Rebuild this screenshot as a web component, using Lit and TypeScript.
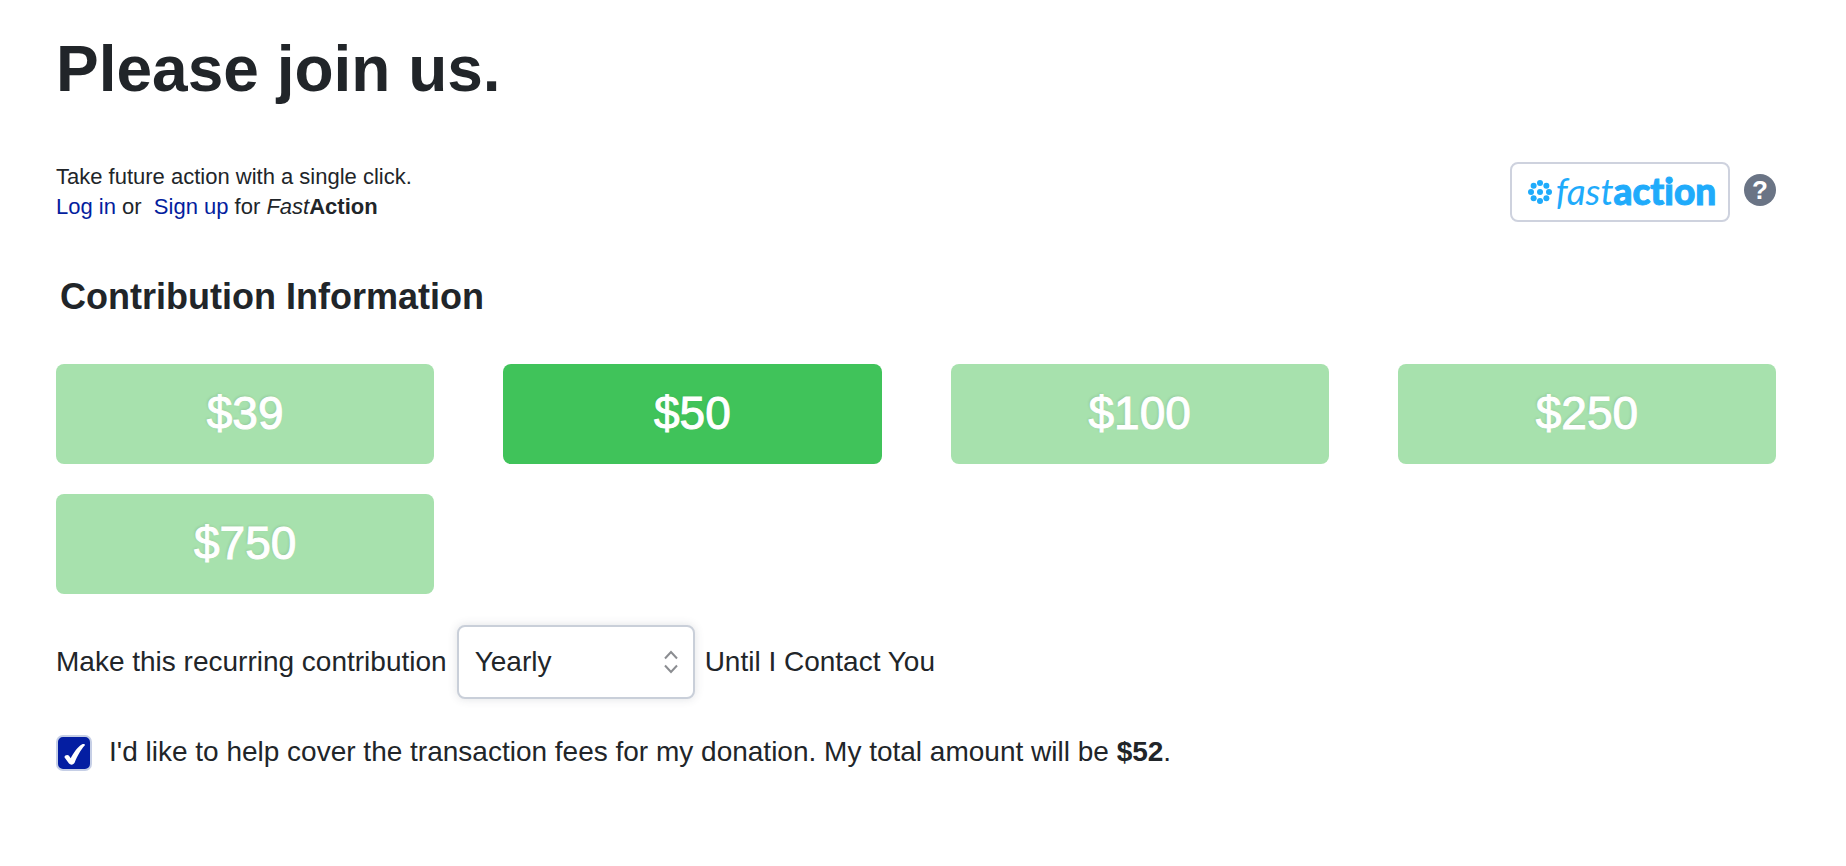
import { LitElement, html, svg, css } from "lit";
import { customElement, state } from "lit/decorators.js";

@customElement("fast-action-bar")
export class FastActionBar extends LitElement {
  static styles = css`
    :host {
      display: flex;
      align-items: flex-start;
      justify-content: space-between;
      gap: 32px;
    }
    .intro {
      margin: 0;
      font-size: 22px;
      line-height: 30px;
    }
    .line {
      display: block;
      white-space: pre-wrap;
    }
    a {
      color: #041e9e;
      text-decoration: none;
    }
    a:hover {
      text-decoration: underline;
    }
    .tools {
      display: flex;
      align-items: flex-start;
      gap: 14px;
    }
    .brand {
      display: flex;
      align-items: center;
      justify-content: center;
      gap: 4px;
      box-sizing: border-box;
      min-width: 220px;
      height: 60px;
      padding: 0 10px 0 14px;
      border: 2px solid #ced2de;
      border-radius: 8px;
      background: #fff;
      color: #1fabfb;
      font: 400 37px/40px Lato, sans-serif;
      font-variant-ligatures: none;
      cursor: pointer;
    }
    .dots {
      flex: none;
      width: 24px;
      height: 24px;
      fill: currentColor;
    }
    .word {
      display: block;
      padding-bottom: 2px;
      white-space: nowrap;
    }
    .word b {
      font-weight: 900;
      -webkit-text-stroke: 1px currentColor;
    }
    .help {
      display: block;
      margin-top: 12px;
      padding: 0;
      width: 32px;
      height: 32px;
      border: 0;
      border-radius: 50%;
      background: #6a7485;
      color: #fff;
      font: 700 26px/32px "Liberation Sans", Arial, sans-serif;
      text-align: center;
      cursor: pointer;
    }
  `;

  render() {
    const ring = Array.from({ length: 8 }, (_, i) => {
      const a = (i * Math.PI) / 4;
      return svg`<circle cx=${12 + 9 * Math.cos(a)} cy=${12 + 9 * Math.sin(a)} r="3" />`;
    });
    return html`
      <p class="intro">
        <span class="line">Take future action with a single click.</span>
        <span class="line"><a href="#login">Log in</a> or  <a href="#signup">Sign up</a> for <i>Fast</i><b>Action</b></span>
      </p>
      <div class="tools">
        <button class="brand" type="button">
          <svg class="dots" viewBox="0 0 24 24" aria-hidden="true">
            ${ring}<circle cx="12" cy="12" r="3" />
          </svg>
          <span class="word"><em>fast</em><b>action</b></span>
        </button>
        <button class="help" type="button">?</button>
      </div>
    `;
  }
}

@customElement("amount-picker")
export class AmountPicker extends LitElement {
  @state() private selected = 50;

  private amounts = [39, 50, 100, 250, 750];

  static styles = css`
    :host {
      display: grid;
      grid-template-columns: repeat(4, 1fr);
      gap: 30px 69px;
    }
    .amount {
      height: 100px;
      padding: 0 0 2px;
      border: 0;
      border-radius: 8px;
      background: #a7e1ad;
      color: #fff;
      font: 400 46px/56px "Liberation Sans", Arial, sans-serif;
      -webkit-text-stroke: 1px currentColor;
      text-shadow: -1px -1px 3px rgba(0, 0, 0, 0.12);
      cursor: pointer;
    }
    .amount[aria-pressed="true"] {
      background: #40c35a;
      text-shadow: -1px -1px 3px rgba(0, 0, 0, 0.06);
    }
  `;

  render() {
    return this.amounts.map(
      (n) => html`<button
        class="amount"
        type="button"
        aria-pressed=${n === this.selected ? "true" : "false"}
        @click=${() => (this.selected = n)}
      >$${n}</button>`
    );
  }
}

@customElement("app-root")
export class AppRoot extends LitElement {
  static styles = css`
    :host {
      display: block;
      box-sizing: border-box;
      min-height: 100vh;
      padding: 32px 70px 64px 56px;
      background: #fff;
      color: #212529;
      font-family: "Liberation Sans", Arial, sans-serif;
    }
    h1 {
      margin: 0;
      font-size: 64px;
      line-height: 74px;
    }
    fast-action-bar {
      margin-top: 56px;
    }
    h2 {
      margin: 52px 0 45px 4px;
      font-size: 36px;
      line-height: 45px;
    }
    .recurring {
      display: flex;
      flex-wrap: wrap;
      align-items: center;
      gap: 10px;
      margin-top: 31px;
      font-size: 28px;
      line-height: 34px;
    }
    .pick {
      position: relative;
      display: block;
    }
    .chevrons {
      position: absolute;
      top: 50%;
      right: 17px;
      width: 14px;
      height: 24px;
      margin-top: -12px;
      fill: none;
      stroke: #8b8d91;
      stroke-width: 2;
      pointer-events: none;
    }
    select {
      appearance: none;
      box-sizing: border-box;
      display: block;
      width: 238px;
      height: 74px;
      padding: 0 48px 0 16px;
      border: 2px solid #c9cfd9;
      border-radius: 8px;
      background: #fff;
      color: inherit;
      font: inherit;
      box-shadow: 0 0 10px rgba(60, 70, 90, 0.16);
    }
    .fees {
      display: flex;
      align-items: flex-start;
      gap: 17px;
      margin-top: 36px;
      font-size: 28px;
      line-height: 34px;
    }
    .box {
      position: relative;
      flex: none;
      display: block;
      width: 36px;
      height: 36px;
    }
    input {
      appearance: none;
      box-sizing: border-box;
      display: block;
      width: 36px;
      height: 36px;
      margin: 0;
      border: 2px solid #c6cfe6;
      border-radius: 7px;
      background: #fff;
    }
    input:checked {
      background: #041ea2;
    }
    .tick {
      position: absolute;
      inset: 0;
      width: 36px;
      height: 36px;
      fill: #fff;
      pointer-events: none;
    }
    input:not(:checked) + .tick {
      display: none;
    }
  `;

  render() {
    return html`
      <h1>Please join us.</h1>
      <fast-action-bar></fast-action-bar>
      <h2>Contribution Information</h2>
      <amount-picker></amount-picker>
      <div class="recurring">
        <label for="frequency">Make this recurring contribution</label>
        <span class="pick">
          <select id="frequency">
            <option>Weekly</option>
            <option>Monthly</option>
            <option>Quarterly</option>
            <option selected>Yearly</option>
          </select>
          <svg class="chevrons" viewBox="0 0 14 24" aria-hidden="true">
            <path d="M1 8.500 7 2l6 6.500M1 15.500 7 22l6-6.500" />
          </svg>
        </span>
        <span>Until I Contact You</span>
      </div>
      <div class="fees">
        <span class="box">
          <input id="fees" type="checkbox" checked />
          <svg class="tick" viewBox="0 0 36 36" aria-hidden="true">
            <path d="M8.600 22.500C7.800 20.400 11.800 18.800 13 20.800L14.700 23.300C17.500 17.500 21.500 12 25.800 9.400C27.600 8.600 29.600 9 28.700 10.600C25 14.500 21 21.500 18.800 27.300C17.700 30.200 14.500 30.400 13 28.600Z" />
          </svg>
        </span>
        <label for="fees">I'd like to help cover the transaction fees for my donation. My total amount will be <b>$52</b>.</label>
      </div>
    `;
  }
}
